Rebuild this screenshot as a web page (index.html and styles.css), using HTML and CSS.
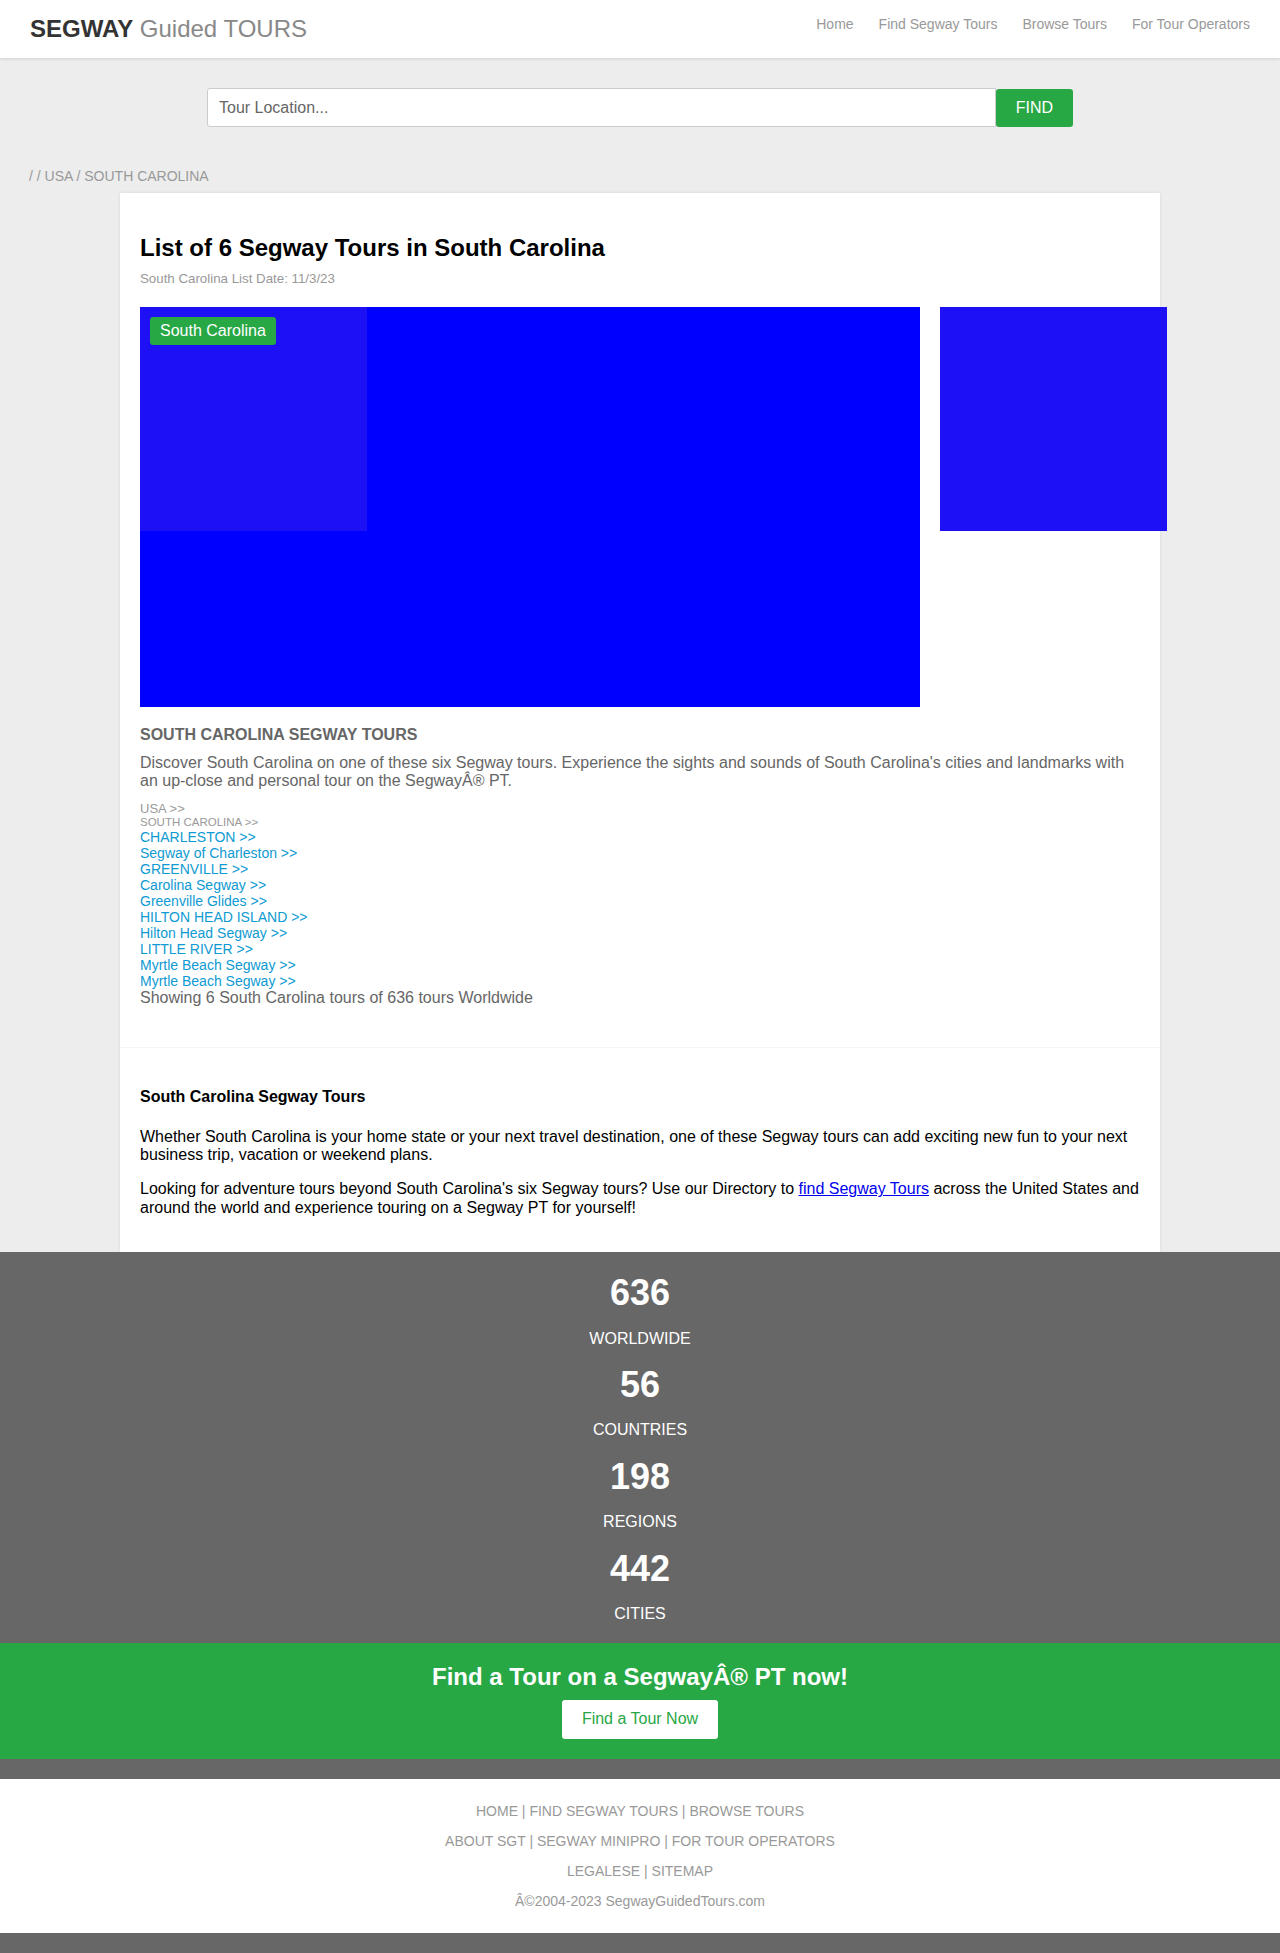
FILE: index.html
```html
<!DOCTYPE html>
<html lang="en">
<head>
<meta charset="utf-8">
<title>Segway Tours in South Carolina</title>
<link rel="stylesheet" href="styles.css">
</head>
<body>
<header class="topbar">
  <a class="logo" href="#"><b>SEGWAY</b> Guided TOURS</a>
  <nav class="nav">
    <a href="#">Home</a>
    <a href="#">Find Segway Tours</a>
    <a href="#">Browse Tours</a>
    <a href="#">For Tour Operators</a>
  </nav>
</header>

<section class="search">
  <form class="search-form">
    <input class="search-input" type="text" placeholder="Tour Location...">
    <button class="search-btn" type="button">FIND</button>
  </form>
</section>

<div class="crumbs">/ / USA / SOUTH CAROLINA</div>

<main class="card">
  <section class="card-main">
    <h1 class="title">List of 6 Segway Tours in South Carolina</h1>
    <div class="subtitle">South Carolina List Date: 11/3/23</div>
    <div class="gallery">
      <div class="hero">
        <div class="hero-thumb"></div>
        <span class="badge">South Carolina</span>
      </div>
      <div class="side-thumb"></div>
    </div>
    <h2 class="sec-head">SOUTH CAROLINA SEGWAY TOURS</h2>
    <p class="sec-text">Discover South Carolina on one of these six Segway tours. Experience the sights and sounds of South Carolina's cities and landmarks with an up-close and personal tour on the SegwayÂ® PT.</p>
    <div class="tree">
      <div class="t-country">USA &gt;&gt;</div>
      <div class="t-state">SOUTH CAROLINA &gt;&gt;</div>
      <a class="t-link" href="#">CHARLESTON &gt;&gt;</a>
      <a class="t-link" href="#">Segway of Charleston &gt;&gt;</a>
      <a class="t-link" href="#">GREENVILLE &gt;&gt;</a>
      <a class="t-link" href="#">Carolina Segway &gt;&gt;</a>
      <a class="t-link" href="#">Greenville Glides &gt;&gt;</a>
      <a class="t-link" href="#">HILTON HEAD ISLAND &gt;&gt;</a>
      <a class="t-link" href="#">Hilton Head Segway &gt;&gt;</a>
      <a class="t-link" href="#">LITTLE RIVER &gt;&gt;</a>
      <a class="t-link" href="#">Myrtle Beach Segway &gt;&gt;</a>
      <a class="t-link" href="#">Myrtle Beach Segway &gt;&gt;</a>
      <div class="t-count">Showing 6 South Carolina tours of 636 tours Worldwide</div>
    </div>
  </section>
  <section class="card-about">
    <h4 class="about-head">South Carolina Segway Tours</h4>
    <p class="about-text">Whether South Carolina is your home state or your next travel destination, one of these Segway tours can add exciting new fun to your next business trip, vacation or weekend plans.</p>
    <p class="about-text">Looking for adventure tours beyond South Carolina's six Segway tours? Use our Directory to <a class="about-link" href="#">find Segway Tours</a> across the United States and around the world and experience touring on a Segway PT for yourself!</p>
  </section>
</main>

<footer class="foot">
  <div class="stats">
    <div class="num">636</div>
    <div class="lbl">WORLDWIDE</div>
    <div class="num">56</div>
    <div class="lbl">COUNTRIES</div>
    <div class="num">198</div>
    <div class="lbl">REGIONS</div>
    <div class="num">442</div>
    <div class="lbl">CITIES</div>
  </div>
  <div class="cta">
    <h3 class="cta-head">Find a Tour on a SegwayÂ® PT now!</h3>
    <a class="cta-btn" href="#">Find a Tour Now</a>
  </div>
  <div class="links">
    <div class="link-row"><a href="#">HOME</a> | <a href="#">FIND SEGWAY TOURS</a> | <a href="#">BROWSE TOURS</a></div>
    <div class="link-row"><a href="#">ABOUT SGT</a> | <a href="#">SEGWAY MINIPRO</a> | <a href="#">FOR TOUR OPERATORS</a></div>
    <div class="link-row"><a href="#">LEGALESE</a> | <a href="#">SITEMAP</a></div>
    <div class="link-row">Â©2004-2023 SegwayGuidedTours.com</div>
  </div>
</footer>
</body>
</html>
```

FILE: styles.css
```css
* { box-sizing: border-box; }
html, body { margin: 0; padding: 0; }
body {
  background: #ededed;
  font-family: "Liberation Sans", Arial, Helvetica, sans-serif;
  color: #000;
}
a { text-decoration: none; }

/* header */
.topbar {
  height: 58px;
  background: #fff;
  box-shadow: 0 1px 3px rgba(0,0,0,0.12);
  display: flex;
  justify-content: space-between;
  padding: 0 30px;
  position: relative;
}
.logo {
  font-size: 24px;
  line-height: 57px;
  color: #888;
}
.logo b { color: #333; }
.nav {
  display: flex;
  gap: 25px;
  padding-top: 15px;
}
.nav a {
  font-size: 14px;
  line-height: 18px;
  color: #999;
}

/* search */
.search {
  padding-top: 30px;
  display: flex;
  justify-content: center;
}
.search-form {
  width: 866px;
  display: flex;
}
.search-input {
  flex: 1;
  height: 39px;
  border: 1px solid #ccc;
  border-radius: 3px 0 0 3px;
  padding: 0 11px;
  font-family: inherit;
  font-size: 16px;
  color: #666;
  background: #fff;
  outline: none;
}
.search-input::placeholder { color: #666; }
.search-btn {
  width: 77px;
  height: 38px;
  margin-top: 1px;
  border: 0;
  border-radius: 3px;
  background: #28a745;
  color: #fff;
  font-family: inherit;
  font-size: 16px;
}

.crumbs {
  margin-top: 41px;
  padding-left: 29px;
  font-size: 14px;
  line-height: 16px;
  color: #999;
}

/* card */
.card {
  width: 1040px;
  margin: 9px auto 0;
  background: #fff;
  box-shadow: 0 0 3px rgba(0,0,0,0.1);
}
.card-main {
  padding: 41px 20px 40px;
}
.title {
  margin: 0;
  font-size: 24px;
  line-height: 27px;
  font-weight: bold;
}
.subtitle {
  margin-top: 10px;
  font-size: 13.3px;
  line-height: 15px;
  color: #999;
}
.gallery {
  margin-top: 21px;
  display: flex;
  gap: 20px;
}
.hero {
  position: relative;
  flex: 0 0 780px;
  height: 400px;
  background: #0000ff;
}
.hero-thumb {
  width: 227px;
  height: 224px;
  background: #1e10f5;
}
.badge {
  position: absolute;
  top: 10px;
  left: 10px;
  height: 28px;
  padding: 0 10px;
  background: #28a745;
  color: #fff;
  font-size: 16px;
  line-height: 28px;
  border-radius: 3px;
}
.side-thumb {
  flex: 0 0 227px;
  height: 224px;
  background: #1e10f5;
}
.sec-head {
  margin: 19px 0 0;
  font-size: 16px;
  line-height: 18px;
  font-weight: bold;
  color: #666;
}
.sec-text {
  margin: 10px 0 0;
  font-size: 16px;
  line-height: 18.4px;
  color: #666;
}
.tree {
  margin-top: 10px;
  display: flex;
  flex-direction: column;
  align-items: flex-start;
}
.t-country {
  font-size: 13px;
  line-height: 15px;
  color: #999;
}
.t-state {
  font-size: 11.5px;
  line-height: 13px;
  color: #999;
}
.t-link {
  font-size: 14px;
  line-height: 16px;
  color: #0e9ad2;
}
.t-count {
  font-size: 16px;
  line-height: 18.4px;
  color: #666;
}
.card-about {
  border-top: 1px solid #f6f6f6;
  padding: 20px;
}
.about-head {
  margin: 20px 0 21px;
  font-size: 16px;
  line-height: 18.4px;
  font-weight: bold;
}
.about-text {
  margin: 0 0 16px;
  font-size: 16px;
  line-height: 18.4px;
}
.about-text:last-child { margin-bottom: 15px; }
.about-link {
  color: #0000ee;
  text-decoration: underline;
}

/* footer */
.foot {
  background: #676767;
  padding-bottom: 20px;
}
.stats {
  padding: 20px 0 19px;
  display: flex;
  flex-direction: column;
  align-items: center;
  gap: 16px;
  color: #fff;
}
.num {
  font-size: 36px;
  line-height: 41.4px;
  font-weight: bold;
}
.lbl {
  font-size: 16px;
  line-height: 18.4px;
}
.cta {
  background: #28a745;
  padding: 20px 0 20px;
  display: flex;
  flex-direction: column;
  align-items: center;
  margin-bottom: 20px;
}
.cta-head {
  margin: 0;
  font-size: 24px;
  line-height: 27.6px;
  font-weight: bold;
  color: #fff;
}
.cta-btn {
  margin-top: 10px;
  background: #fff;
  color: #28a745;
  font-size: 16px;
  line-height: 18.4px;
  padding: 10px 20px;
  border-radius: 3px;
}
.links {
  background: #fff;
  padding: 22px 0;
  display: flex;
  flex-direction: column;
  align-items: center;
  gap: 10px;
  font-size: 14px;
  line-height: 20px;
  color: #999;
}
.links a { color: #999; }
```
